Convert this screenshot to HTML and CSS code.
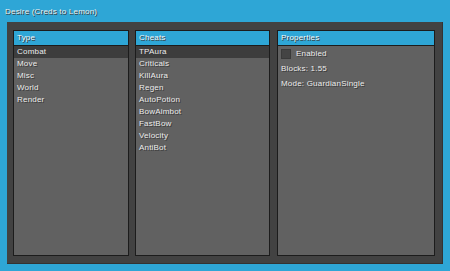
FILE: index.html
```html
<!DOCTYPE html>
<html>
<head>
<meta charset="utf-8">
<link rel="stylesheet" href="styles.css">
</head>
<body>
<div class="title">Desire (Creds to Lemon)</div>
<div class="panel">
  <div class="col">
    <div class="head">Type</div>
    <div class="row sel">Combat</div>
    <div class="row">Move</div>
    <div class="row">Misc</div>
    <div class="row">World</div>
    <div class="row">Render</div>
  </div>
  <div class="col">
    <div class="head">Cheats</div>
    <div class="row sel">TPAura</div>
    <div class="row">Criticals</div>
    <div class="row">KillAura</div>
    <div class="row">Regen</div>
    <div class="row">AutoPotion</div>
    <div class="row">BowAimbot</div>
    <div class="row">FastBow</div>
    <div class="row">Velocity</div>
    <div class="row">AntiBot</div>
  </div>
  <div class="col">
    <div class="head">Properties</div>
    <div class="props">
      <div class="check"><span class="box"></span><span>Enabled</span></div>
      <div class="prop">Blocks: 1.55</div>
      <div class="prop">Mode: GuardianSingle</div>
    </div>
  </div>
</div>
</body>
</html>
```
FILE: styles.css
```css
html, body {
  margin: 0;
  padding: 0;
}
body {
  width: 450px;
  height: 271px;
  background: #2ea6d6;
  font-family: "Liberation Sans", Arial, sans-serif;
  font-size: 8px;
  letter-spacing: 0.2px;
  color: #ececec;
  text-shadow: 1px 1px 0 #3a3a3a;
  overflow: hidden;
}
.title {
  height: 22px;
  line-height: 24px;
  padding-left: 5px;
  box-sizing: border-box;
}
.panel {
  margin: 0 7px;
  height: 242px;
  box-sizing: border-box;
  background: #424242;
  border-bottom: 1px solid #333;
  border-right: 1px solid #333;
  padding: 8px 6px 7px 6px;
  display: grid;
  grid-template-columns: 116px 135px 159px;
  column-gap: 6px;
}
.panel .col:nth-child(3) {
  margin-left: 1px;
}
.col {
  height: 226px;
  box-sizing: border-box;
  border: 1px solid #1c1c1c;
  background: #616161;
  display: flex;
  flex-direction: column;
}
.head {
  height: 14px;
  line-height: 14px;
  background: #2ea6d6;
  border-bottom: 1px solid #1c1c1c;
  padding-left: 3px;
  color: #f2f8fb;
}
.row {
  height: 12px;
  line-height: 12px;
  padding-left: 3px;
}
.row.sel {
  background: #3d3d3d;
}
.props {
  padding: 2px 3px;
  display: flex;
  flex-direction: column;
}
.check {
  display: flex;
  align-items: center;
  gap: 5px;
  height: 11px;
}
.box {
  width: 10px;
  height: 10px;
  background: #444;
  border: 1px solid #3a3a3a;
  box-sizing: border-box;
}
.prop {
  margin-top: 4px;
  height: 11px;
  line-height: 11px;
}
```
